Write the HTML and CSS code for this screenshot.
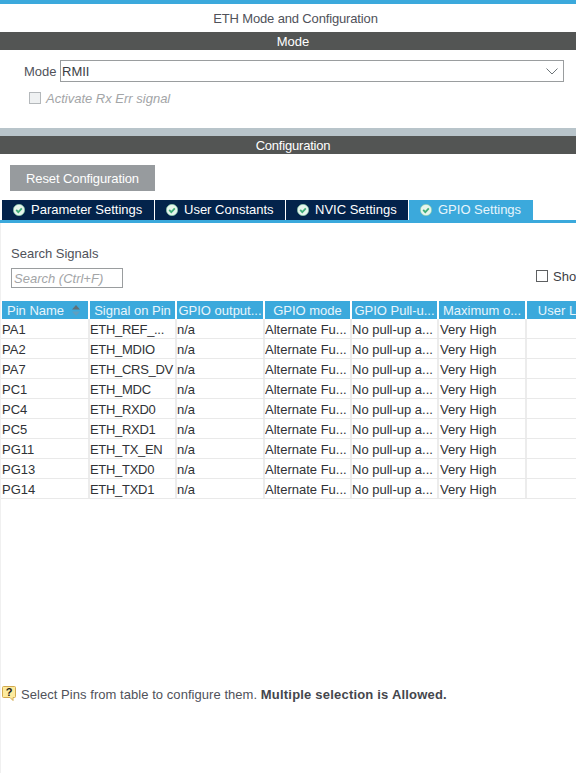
FILE: index.html
```html
<!DOCTYPE html>
<html lang="en">
<head>
	<meta charset="UTF-8">
	<title>ETH Mode and Configuration</title>
	<link rel="stylesheet" href="styles.css">
</head>
<body>
	<div class="topLine"></div>
	<div class="title">ETH Mode and Configuration</div>
	<div class="bar">Mode</div>
	<div class="modeBox">
		<div class="modeRow">
			<span class="modeLabel">Mode</span>
			<div class="select">
				<span>RMII</span>
				<svg width="12" height="7" viewBox="0 0 12 7"><path d="M.5.5l5.500 5.500 5.500-5.500" fill="none" stroke="#6d7478" stroke-width="1"/></svg>
			</div>
		</div>
		<div class="rxRow">
			<span class="rxCheck"></span>
			<span>Activate Rx Err signal</span>
		</div>
	</div>
	<div class="split"></div>
	<div class="bar cfgBar">Configuration</div>
	<div class="resetWrap"><div class="resetBtn">Reset Configuration</div></div>
	<div class="tabs">
		<div class="tab t1"><svg class="ok" viewBox="0 0 12 12"><circle cx="6" cy="6" r="5.700" fill="#e6f5ec" stroke="#7cc8a2" stroke-width=".6"/><path d="M3.200 5.900l2.100 2.200 3.500-3.700" fill="none" stroke="#3fae78" stroke-width="1.800"/></svg><span class="tabText">Parameter Settings</span></div>
		<div class="tab t2"><svg class="ok" viewBox="0 0 12 12"><circle cx="6" cy="6" r="5.700" fill="#e6f5ec" stroke="#7cc8a2" stroke-width=".6"/><path d="M3.200 5.900l2.100 2.200 3.500-3.700" fill="none" stroke="#3fae78" stroke-width="1.800"/></svg><span class="tabText">User Constants</span></div>
		<div class="tab t3"><svg class="ok" viewBox="0 0 12 12"><circle cx="6" cy="6" r="5.700" fill="#e6f5ec" stroke="#7cc8a2" stroke-width=".6"/><path d="M3.200 5.900l2.100 2.200 3.500-3.700" fill="none" stroke="#3fae78" stroke-width="1.800"/></svg><span class="tabText">NVIC Settings</span></div>
		<div class="tab t4 active"><svg class="ok" viewBox="0 0 12 12"><circle cx="6" cy="6" r="5.700" fill="#e6f5ec" stroke="#7cc8a2" stroke-width=".6"/><path d="M3.200 5.900l2.100 2.200 3.500-3.700" fill="none" stroke="#3fae78" stroke-width="1.800"/></svg><span class="tabText">GPIO Settings</span></div>
	</div>
	<div class="panel">
		<div class="searchLabel">Search Signals</div>
		<div class="searchRow">
			<div class="searchBox">Search (Ctrl+F)</div>
			<div class="showBox"><span class="showCheck"></span><span>Show</span></div>
		</div>
		<div class="grid head">
			<div class="pinHead">Pin Name<svg width="10" height="11" viewBox="0 0 10 11"><path d="M5 0l4 4.500H1z" fill="#5f7078"/><path d="M5 11l4-4.500H1z" fill="#5f9fc0"/></svg></div>
			<div>Signal on Pin</div>
			<div>GPIO output...</div>
			<div>GPIO mode</div>
			<div>GPIO Pull-u...</div>
			<div>Maximum o...</div>
			<div>User L</div>
		</div>
		<div class="grid row"><div>PA1</div><div>ETH_REF_...</div><div>n/a</div><div>Alternate Fu...</div><div>No pull-up a...</div><div>Very High</div><div></div></div>
		<div class="grid row"><div>PA2</div><div>ETH_MDIO</div><div>n/a</div><div>Alternate Fu...</div><div>No pull-up a...</div><div>Very High</div><div></div></div>
		<div class="grid row"><div>PA7</div><div>ETH_CRS_DV</div><div>n/a</div><div>Alternate Fu...</div><div>No pull-up a...</div><div>Very High</div><div></div></div>
		<div class="grid row"><div>PC1</div><div>ETH_MDC</div><div>n/a</div><div>Alternate Fu...</div><div>No pull-up a...</div><div>Very High</div><div></div></div>
		<div class="grid row"><div>PC4</div><div>ETH_RXD0</div><div>n/a</div><div>Alternate Fu...</div><div>No pull-up a...</div><div>Very High</div><div></div></div>
		<div class="grid row"><div>PC5</div><div>ETH_RXD1</div><div>n/a</div><div>Alternate Fu...</div><div>No pull-up a...</div><div>Very High</div><div></div></div>
		<div class="grid row"><div>PG11</div><div>ETH_TX_EN</div><div>n/a</div><div>Alternate Fu...</div><div>No pull-up a...</div><div>Very High</div><div></div></div>
		<div class="grid row"><div>PG13</div><div>ETH_TXD0</div><div>n/a</div><div>Alternate Fu...</div><div>No pull-up a...</div><div>Very High</div><div></div></div>
		<div class="grid row"><div>PG14</div><div>ETH_TXD1</div><div>n/a</div><div>Alternate Fu...</div><div>No pull-up a...</div><div>Very High</div><div></div></div>
		<div class="hint">
			<svg width="14" height="16" viewBox="0 0 14 16"><path d="M1.500.5h11a1 1 0 0 1 1 1v9a1 1 0 0 1-1 1h-1.500v3l-3-3H1.500a1 1 0 0 1-1-1v-9a1 1 0 0 1 1-1z" fill="#fdeb9e" stroke="#d2a94e"/><text x="7" y="10" font-size="11" font-weight="bold" text-anchor="middle" fill="#1c1c1c" font-family="Liberation Sans">?</text></svg>
			<span>Select Pins from table to configure them. <b>Multiple selection is Allowed.</b></span>
		</div>
	</div>
</body>
</html>
```

FILE: styles.css
```css
html,body{
	margin:0;
	padding:0;
	height:100%;
	overflow:hidden;
	background:#fff;
}
body{
	font:13px 'Liberation Sans',Arial,sans-serif;
	color:#50525a;
}
.topLine{
	height:4px;
	background:#3ba9dc;
}
.title{
	height:28px;
	line-height:29px;
	text-align:center;
	padding-left:15px;
	letter-spacing:-.15px;
}
.bar{
	height:18px;
	line-height:19px;
	background:#535554;
	color:#fff;
	text-align:center;
	padding-left:10px;
}
.cfgBar{
	letter-spacing:-.2px;
}
.modeBox{
	height:78px;
	padding-left:24px;
	box-sizing:border-box;
	padding-top:10px;
}
.modeRow{
	display:flex;
	align-items:center;
}
.modeLabel{
	width:36px;
}
.select{
	display:flex;
	align-items:center;
	justify-content:space-between;
	width:499px;
	height:20px;
	border:1px solid #9a9d9f;
	padding:0 2px 0 1px;
	color:#3c3e44;
}
.select svg{
	margin-right:3px;
}
.rxRow{
	display:flex;
	align-items:center;
	gap:5px;
	margin:9px 0 0 5px;
	font-style:italic;
	color:#a3a5a7;
}
.rxCheck{
	width:10px;
	height:10px;
	margin-bottom:2px;
	border:1px solid #b4b8bb;
	background:#eff1f2;
}
.split{
	height:8px;
	background:#b8c4ca;
}
.resetWrap{
	padding:11px 0 9px 10px;
}
.resetBtn{
	width:145px;
	height:26px;
	line-height:27px;
	background:#979b9e;
	color:#fff;
	text-align:center;
	letter-spacing:-.1px;
}
.tabs{
	display:flex;
	height:20px;
	padding-left:2px;
	border-bottom:3px solid #3ba9dc;
}
.tab{
	display:flex;
	align-items:center;
	height:20px;
	background:#03234b;
	color:#fff;
	margin-right:1px;
	box-sizing:border-box;
	padding-left:11px;
}
.tabText{
	margin-bottom:2px;
}
.tab.active{
	background:#3ba9dc;
	color:#e8f5fb;
}
.t1{width:152px;}
.t2{width:130px;}
.t3{width:122px;}
.t4{width:124px;}
.ok{
	width:12px;
	height:12px;
	margin-right:6px;
}
.panel{
	position:relative;
	height:550px;
	border-left:1px solid #f0f0f0;
	overflow:hidden;
}
.searchLabel{
	margin:23px 0 0 10px;
	height:15px;
	line-height:16px;
}
.searchRow{
	display:flex;
	margin:7px 0 13px 10px;
	height:20px;
}
.searchBox{
	width:108px;
	height:18px;
	line-height:19px;
	border:1px solid #9a9d9f;
	padding-left:2px;
	flex:none;
	font-style:italic;
	color:#a3a5a7;
}
.showBox{
	display:flex;
	align-items:center;
	gap:5px;
	margin-left:413px;
	height:14px;
	margin-top:1px;
	white-space:nowrap;
	color:#3c3e44;
}
.showCheck{
	width:10px;
	height:10px;
	flex:none;
	border:1px solid #5d5f61;
}
.grid{
	display:grid;
	grid-template-columns:86px 85px 86px 85px 85px 86px 60px;
	column-gap:2px;
	padding-left:1px;
	width:620px;
}
.head{
	height:18px;
	line-height:19px;
	color:#e8f5fb;
}
.head>div{
	background:#3ba9dc;
	text-align:center;
	white-space:nowrap;
	overflow:hidden;
}
.pinHead{
	display:flex;
	align-items:center;
	padding-left:5px;
	gap:7px;
}
.row{
	height:20px;
	line-height:21px;
	color:#303236;
	border-bottom:1px solid #e9e9e9;
	box-sizing:border-box;
	column-gap:0;
	grid-template-columns:88px 87px 88px 87px 87px 88px 60px;
}
.row>div{
	border-right:2px solid #ececec;
	white-space:nowrap;
	overflow:hidden;
}
.row>div:nth-child(2){
	letter-spacing:-.3px;
}
.row>div:nth-child(6){
	padding-left:1px;
}
.hint{
	position:absolute;
	left:1px;
	top:463px;
	display:flex;
	align-items:center;
	gap:5px;
}
.hint span{
	letter-spacing:.05px;
}
.hint b{
	color:#44464c;
	letter-spacing:.2px;
}
```
